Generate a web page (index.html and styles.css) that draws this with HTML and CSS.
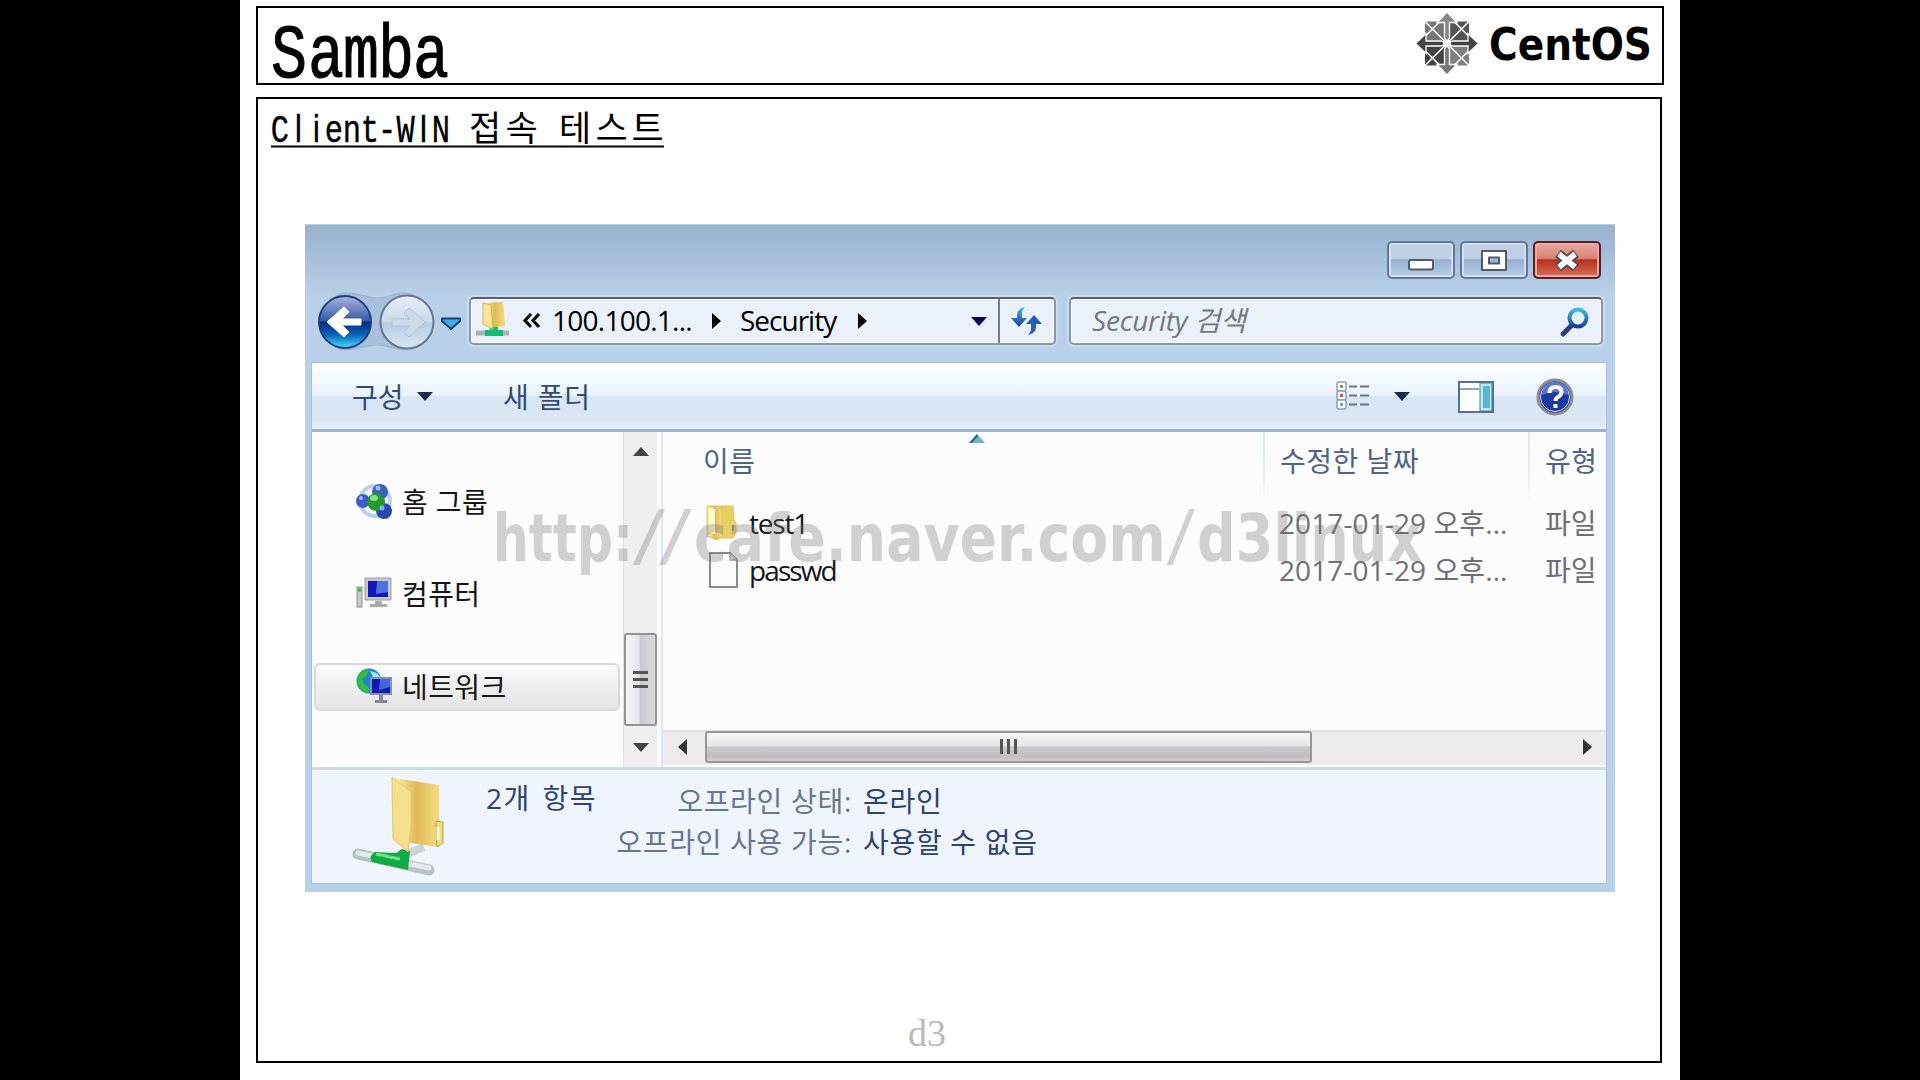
FILE: index.html
```html
<!DOCTYPE html>
<html lang="ko">
<head>
<meta charset="utf-8">
<title>Samba</title>
<link rel="stylesheet" href="styles.css">
</head>
<body>
<main class="slide">
  <header class="slide-head">
    <svg class="title" width="200" height="75" viewBox="258 8 200 75">
      <text transform="scale(.79 1)" y="77" x="365.8 412.7 457 501.3 545.6">Samba</text>
    </svg>
    <svg class="logo" width="246" height="70" viewBox="1410 8 246 70">
      <g transform="translate(1447 43.5)">
        <rect x="-22" y="-22" width="22" height="22" fill="#777"/><rect width="22" height="22" y="-22" fill="#555"/>
        <rect x="-22" width="22" height="22" fill="#444"/><rect width="22" height="22" fill="#808080"/>
        <g stroke="#fff" stroke-width="1.3">
          <path d="M-22-22 22 22M22-22-22 22M-7-22-16-13M7-22 16-13M-7 22-16 13M7 22 16 13M-22-7-13-16M22-7 13-16M-22 7-13 16M22 7 13 16" fill="none" stroke-width="1.500"/>
          <path d="M0-31.500 10-21H2.500V-6L0 0-2.500-6V-21H-10Z" fill="#888"/>
          <path d="M0 31.500 10 21H2.500V6L0 0-2.500 6V21H-10Z" fill="#777"/>
          <path d="M-31.500 0-21-10V-2.500H-6L0 0-6 2.500H-21V10Z" fill="#444"/>
          <path d="M31.500 0 21-10V-2.500H6L0 0 6 2.500H21V10Z" fill="#444"/>
        </g>
        <circle r="4" fill="#fff"/>
      </g>
      <text class="logo-text" y="59.500" x="1489" textLength="163" lengthAdjust="spacingAndGlyphs">CentOS</text>
    </svg>
  </header>

  <section class="slide-body">
    <svg class="subtitle" width="420" height="52" viewBox="258 99 420 52">
      <text class="latin" transform="scale(.8 1)" y="142" x="350 373.100 395.600 417.500 440 462.500 483.800 506.900 529.400 551.200">C<tspan class="bar">li</tspan>ent-W<tspan class="bar">I</tspan>N</text>
      <text class="hangul" y="140.500" x="485 521.500 539 575 611.500 647.500">접속 테스트</text>
      <path d="M271 146.500H664" stroke="#000" stroke-width="2"/>
    </svg>

    <div class="window">
      <div class="caption">
        <div class="cap-btn"><svg width="68" height="37"><rect x="22" y="18" width="24" height="9.500" rx="2" fill="#fff" stroke="#555a68" stroke-width="2"/></svg></div>
        <div class="cap-btn"><svg width="68" height="37"><path d="M22 9h24v19h-24zM29 15.500v6h10v-6z" fill="#fff" fill-rule="evenodd" stroke="#555a68" stroke-width="2" stroke-linejoin="round"/></svg></div>
        <div class="cap-btn close"><svg width="68" height="37"><path d="M25 11.500 43 25.500M43 11.500 25 25.500" stroke="#5c4a55" stroke-width="9.500"/><path d="M26 12 42 25M42 12 26 25" stroke="#fff" stroke-width="5.500"/></svg></div>
      </div>

      <div class="nav-row">
        <svg class="nav-btns" width="162" height="64" viewBox="308 290 162 64">
          <defs>
            <linearGradient id="bk" x2="0" y2="1"><stop stop-color="#aab6df"/><stop offset=".48" stop-color="#3558ac"/><stop offset=".5" stop-color="#082a80"/><stop offset=".75" stop-color="#0d63bd"/><stop offset="1" stop-color="#48e2ff"/></linearGradient>
            <linearGradient id="fw" x2="0" y2="1"><stop stop-color="#e6eff8"/><stop offset=".48" stop-color="#cbd9e9"/><stop offset=".52" stop-color="#b8cce3"/><stop offset="1" stop-color="#d6e6f6"/></linearGradient>
            <linearGradient id="fold" x2="1" y2="0"><stop stop-color="#fff3ae"/><stop offset=".5" stop-color="#dfba55"/><stop offset="1" stop-color="#f5dc80"/></linearGradient>
            <linearGradient id="cy" x2="0" y2="1"><stop stop-color="#42bce0"/><stop offset="1" stop-color="#1c3f94"/></linearGradient>
          </defs>
          <path d="M345 293c18 0 22 5 33 5s14-5 30-5a29 29 0 0 1 0 57c-14 0-18-5-30-5s-18 5-33 5a29 29 0 0 1 0-57z" fill="#a9c0dc" stroke="#9cb2cf"/>
          <circle cx="346" cy="322" r="26" fill="url(#bk)" stroke="#1d3f7e" stroke-width="2"/>
          <path d="M328 322 345 307 350 312 343 319H362V325H343L350 332 345 337Z" fill="#fff" stroke="#fff" stroke-linejoin="round"/>
          <circle cx="408" cy="322" r="26.500" fill="url(#fw)" stroke="#66788f" stroke-width="2"/>
          <path d="M426 322 410 308 405 313 411 319H393V326H411L405 332 410 337Z" fill="#ccdae9" stroke="#b6c6d9"/>
          <path d="M443 318.500H461V321L452 329 443 321Z" fill="#3eaee6" stroke="#163f78" stroke-width="2" stroke-linejoin="round"/>
        </svg>

        <div class="field address">
          <svg class="addr-icon" width="40" height="44" viewBox="472 299 40 44">
            <path d="M475 333H508" stroke="#a9b1b6" stroke-width="5"/><path d="M484 330h5v-5h8v5h5v6h-18z" fill="#13bd74"/>
            <path d="M483 303 502 302 503 313 504 326 494 327 483 324Z" fill="url(#fold)"/><path d="M482 303 490 305 492 329 482 324Z" fill="#f8e595" stroke="#d8b452"/>
          </svg>
          <svg width="34" height="44" viewBox="512 299 34 44"><path d="M530 314 524 320.500 530 327M538 314 532 320.500 538 327" fill="none" stroke="#000" stroke-width="3"/></svg>
          <span class="txt host">100.100.1...</span>
          <i class="tri right"></i>
          <span class="txt share">Security</span>
          <i class="tri right second"></i>
          <i class="tri down navy"></i>
          <div class="refresh"><svg width="34" height="34" viewBox="0 0 34 34"><path d="M15 3C7 5 7 9 7 14H1L9 23 17 14H12C12 10 11 7 15 3Z" fill="url(#cy)"/><path d="M18 31C26 29 26 25 26 20H32L24 11 16 20H21C21 24 22 27 18 31Z" fill="#285eae"/></svg></div>
        </div>

        <div class="field search">
          <span class="txt">Security 검색</span>
          <svg width="32" height="32" viewBox="0 0 32 32"><path d="M4 28 15 17" stroke="#263f86" stroke-width="5" stroke-linecap="round"/><circle cx="19" cy="12" r="8.500" fill="#e2f2fc" stroke="url(#cy)" stroke-width="4"/></svg>
        </div>
      </div>

      <div class="frame">
        <div class="toolbar">
          <span class="txt organize">구성</span><i class="tri down"></i>
          <span class="txt newfolder">새 폴더</span>
          <svg class="view" width="34" height="32" viewBox="0 0 34 32">
            <g fill="#fff" stroke="#8b9fb6" stroke-width="1.500"><rect x="1" y="1" width="9" height="9" rx="2"/><rect x="1" y="10" width="9" height="9" rx="2"/><rect x="1" y="19" width="9" height="9" rx="2"/></g>
            <path d="M4 5.500h3" stroke="#7a9b58" stroke-width="3"/><path d="M4 14.500h3" stroke="#e04c38" stroke-width="3"/><path d="M4 23.500h3" stroke="#8299b6" stroke-width="3"/>
            <path d="M13 5.500H21M24 5.500H33M13 14.500H21M24 14.500H33M13 23.500H21M24 23.500H33" stroke="#66758a" stroke-width="2"/>
          </svg>
          <i class="tri down viewtri"></i>
          <svg class="pane" width="36" height="32" viewBox="0 0 36 32"><rect x="1" y="1" width="34" height="30" fill="#fff" stroke="#53708d" stroke-width="2"/><path d="M2 8H21" stroke="#8ca4bc" stroke-width="2"/><rect x="22" y="2" width="12" height="28" fill="#b9eef8" stroke="#517d9b"/><rect x="25" y="5" width="7" height="22" fill="#5bb6ce"/></svg>
          <svg class="help" width="38" height="38" viewBox="0 0 38 38"><circle cx="19" cy="19" r="17" fill="#1b3aa4" stroke="#8c8d92" stroke-width="3"/><circle cx="19" cy="19" r="14.500" fill="none" stroke="#d8dcec"/><path d="M6 17a13 13 0 0 1 26 0q-13-6-26 0" fill="#5877ce"/><path d="M13.500 15q0-6 6-6t6 5q0 3-3.500 5-2.500 1.500-2.500 4M19.500 26v4" fill="none" stroke="#fff" stroke-width="4"/></svg>
        </div>

        <div class="content">
          <nav class="tree">
            <div class="node"><svg width="37" height="37" viewBox="0 0 37 37"><circle cx="19" cy="18" r="15" fill="none" stroke="#bad0ee" stroke-width="4"/><circle cx="24" cy="9" r="8" fill="#3b62bd"/><circle cx="7" cy="18" r="7" fill="#3f5ac9"/><circle cx="28" cy="28" r="8" fill="#2848b6"/><circle cx="20" cy="19" r="9" fill="#229a2d"/><ellipse cx="18" cy="15" rx="4" ry="3" fill="#8edc86"/><circle cx="5" cy="15" r="2" fill="#a8baf0"/><circle cx="26" cy="25" r="2.500" fill="#8ea6ec"/><circle cx="22" cy="5" r="2.500" fill="#9fc0ee"/></svg><span class="txt">홈 그룹</span></div>
            <div class="node"><svg width="37" height="37" viewBox="0 0 37 37"><rect x="1" y="11" width="5" height="20" fill="#c4c9ca" stroke="#8a9090"/><path d="M2 14h3" stroke="#26c42f" stroke-width="3"/><path d="M9 2H35V24H9Z" fill="#c8c9c9" stroke="#9b9ea1"/><path d="M12 5H32V21H12Z" fill="#1117bb"/><path d="M21 5H32V16L20 18Z" fill="#536fdf"/><path d="M19 25h7v3h5v3H14v-3h5z" fill="#a7a9ab"/></svg><span class="txt">컴퓨터</span></div>
            <div class="node selected"><svg width="37" height="37" viewBox="0 0 37 37"><circle cx="13" cy="13" r="12.500" fill="#1f85cf"/><path d="M2 8C7 1 10 1 13 2L11 7 6 11 8 16 13 20V25C5 24 1 18 1 13Z" fill="#35bd3c"/><path d="M14 3q9 1 11 8l-8-2z" fill="#9fe6f5"/><path d="M14 9H36V27H14Z" fill="#8590ad"/><path d="M16 11H34V25H16Z" fill="#1319b6"/><path d="M24 11H34V19L23 22Z" fill="#4963dc"/><path d="M23 27h4v5h4v3H19v-3h4z" fill="#7f8a9b"/></svg><span class="txt">네트워크</span></div>
          </nav>
          <div class="vbar">
            <i class="arrow up"></i>
            <div class="vthumb"><i></i><i></i><i></i></div>
            <i class="arrow dn"></i>
          </div>
          <div class="files">
            <div class="cols">
              <div class="col"><span class="txt">이름</span><svg class="sort" width="16" height="10"><path d="M0 9 8 0 16 9Z" fill="#6fb0cc"/><path d="M0 9 8 0 9 2 3 9Z" fill="#32657f"/></svg></div>
              <div class="col"><span class="txt">수정한 날짜</span></div>
              <div class="col"><span class="txt">유형</span></div>
            </div>
            <div class="row">
              <div class="name"><svg width="40" height="40" viewBox="0 0 40 40"><path d="M12 3H29L30 17 32 20V30L29 35H12Z" fill="#e9cf62" stroke="#dfc465"/><path d="M3 3H12L18 5V33L13 37 3 33Z" fill="url(#fold)" stroke="#dec362"/><path d="M5 5 11 6V31L5 30Z" fill="#fffbd5"/><path d="M29 22v6" stroke="#6ba7bd" stroke-width="2"/></svg><span class="txt">test1</span></div>
              <span class="txt date">2017-01-29 오후...</span><span class="txt type">파일</span>
            </div>
            <div class="row">
              <div class="name"><svg width="40" height="40" viewBox="0 0 40 40"><path d="M6 3H26L33 10V37H6Z" fill="#fafafa" stroke="#8a8a8a" stroke-width="2"/><path d="M26 3V10H33" fill="#ddd" stroke="#9b9b9b" stroke-width="1.500"/></svg><span class="txt passwd">passwd</span></div>
              <span class="txt date">2017-01-29 오후...</span><span class="txt type">파일</span>
            </div>
            <div class="hbar">
              <i class="arrow lf"></i>
              <div class="hthumb"><i></i><i></i><i></i></div>
              <i class="arrow rt"></i>
            </div>
          </div>
        </div>

        <div class="details">
          <svg class="share-icon" width="96" height="106" viewBox="350 772 96 106">
            <path d="M358 851 429 867" stroke="#b6c2c4" stroke-width="11" stroke-linecap="round"/><path d="M358 850 429 865" stroke="#e3eaea" stroke-width="5" stroke-linecap="round"/>
            <path d="M402 853 424 844" stroke="#ced4d6" stroke-width="8"/>
            <path d="M375 849 396 850 402 846 410 848 408 867 372 859Q368 853 375 849Z" fill="#12ab43"/><path d="M376 851 400 856" stroke="#6fe18c" stroke-width="3"/>
            <path d="M394 775 439 782 439 844 410 840Z" fill="url(#fold)"/><path d="M436 818 443 819V840L437 844Z" fill="#f3dc80" stroke="#b79d54"/><path d="M438 824V837" stroke="#fffbd9" stroke-width="3"/><path d="M392 774 411 789V824L408 849 393 836Z" fill="#f5df8c" stroke="#e6c96e"/>
          </svg>
          <span class="txt count">2개 항목</span>
          <div class="facts">
            <span class="txt label">오프라인 상태:</span><span class="txt value">온라인</span>
            <span class="txt label">오프라인 사용 가능:</span><span class="txt value">사용할 수 없음</span>
          </div>
        </div>
      </div>
    </div>
    <footer class="page-mark">d3</footer>
  </section>

  <svg class="watermark" width="960" height="80" viewBox="480 500 960 80">
    <text y="561"><tspan x="493" textLength="140" lengthAdjust="spacingAndGlyphs">http:</tspan><tspan class="slash" x="632" textLength="62" lengthAdjust="spacingAndGlyphs">//</tspan><tspan x="694" textLength="472" lengthAdjust="spacingAndGlyphs">cafe.naver.com</tspan><tspan class="slash" x="1166" textLength="31" lengthAdjust="spacingAndGlyphs">/</tspan><tspan x="1197" textLength="225" lengthAdjust="spacingAndGlyphs">d3linux</tspan></text>
  </svg>
</main>
</body>
</html>
```
FILE: styles.css
```css
* { box-sizing: border-box; }
body { margin: 0; background: #000; font-family: "Open Sans", "Noto Sans CJK KR", sans-serif; }
svg { display: block; flex: none; overflow: visible; }
i { display: block; flex: none; }

.slide { position: relative; width: 1440px; height: 1080px; margin: 0 auto; padding: 6px 16px 0; background: #fff; overflow: hidden; }
.slide-head { width: 1408px; height: 79px; border: 2px solid #000; display: flex; justify-content: space-between; }
.slide-body { width: 1406px; height: 966px; margin-top: 12px; border: 2px solid #000; display: flex; flex-direction: column; }
.title text { font: 76px "Liberation Mono", monospace; text-anchor: middle; stroke: #000; stroke-width: 1px; }
.logo { margin-right: 6px; }
.logo-text { font: bold 45px "DejaVu Sans", sans-serif; }
.subtitle .latin { font: 38px "Liberation Mono", monospace; text-anchor: middle; stroke: #000; stroke-width: .4px; }
.subtitle .bar { font-family: "Liberation Sans", sans-serif; font-size: 38px; }
.subtitle .hangul { font: 35px "Noto Sans CJK KR", sans-serif; text-anchor: middle; }

.txt { font-size: 28px; line-height: 36px; white-space: nowrap; }

/* Explorer window */
.window { width: 1310px; height: 668px; margin: 73px 0 0 47px; padding: 0 9px 9px 7px; background: linear-gradient(#98b2d0, #b9d0ea 72px, #b9d0ea); border-top: 1px solid #b7cbe1; display: flex; flex-direction: column; }
.caption { height: 66px; padding: 16px 5px 0 0; display: flex; justify-content: flex-end; gap: 5px; }
.cap-btn { width: 68px; height: 38px; border: 2px solid #64779a; border-radius: 5px; background: linear-gradient(#bfd0e6 0 45%, #96b1d1 50%, #b5cde8); box-shadow: inset 0 0 0 2px #d3e0f0; display: flex; align-items: center; justify-content: center; }
.close { border-color: #55202d; background: linear-gradient(#e8a79c, #d88376 45%, #b6321d 50%, #d8705a); box-shadow: inset 0 0 0 2px #eba99e; }
.nav-row { height: 72px; display: flex; align-items: flex-start; }
.nav-btns { margin: -1px 0 0 -5px; }
.field { height: 48px; margin-top: 6px; border: 2px solid #8497ad; border-top-color: #59606b; border-radius: 5px; background: #eaf1fa; box-shadow: 0 0 0 2px #cbdbee, inset 0 0 0 1px #fff; display: flex; align-items: center; }
.field .txt { margin-top: -3px; }
.address { width: 587px; }
.addr-icon { margin-left: 2px; }
.host { width: 160px; margin-left: 5px; letter-spacing: -.75px; }
.address .share { width: 120px; margin-left: 19px; letter-spacing: -1px; }
.tri { width: 0; height: 0; border: solid transparent; }
.tri.right { border-width: 8px 0 8px 9px; border-left-color: #000; margin-left: 0; }
.tri.right.second { margin-left: -2px; }
.tri.down { border-width: 9px 8px 0; border-top-color: #17294e; }
.tri.navy { border-top-color: #080758; margin-left: 104px; }
.refresh { width: 56px; height: 44px; margin-left: auto; border-left: 2px solid #747d8a; display: flex; align-items: center; justify-content: center; }
.search { width: 534px; margin-left: 13px; padding: 0 10px 0 21px; justify-content: space-between; }
.search svg { margin-top: 1px; }
.search .txt { font-style: italic; color: #747880; letter-spacing: -.2px; }

.frame { width: 1294px; flex: 1; background: #fcfcfc; box-shadow: 0 0 0 1px #a7bfdd; display: flex; flex-direction: column; }
.toolbar { height: 69px; padding: 1px 32px 0 40px; border-bottom: 3px solid #a3b2ca; background: linear-gradient(#fcfeff, #ebf3fc 48%, #dae5f3 52%, #dce7f5 88%, #e5f0fc); color: #334b72; display: flex; align-items: center; }
.organize { width: 65px; }
.newfolder { margin-left: 70px; letter-spacing: .8px; }
.view { margin-left: auto; }
.viewtri { margin-left: 24px; }
.pane { margin-left: 48px; }
.help { margin-left: 42px; }

.content { height: 335px; display: flex; }
.tree { width: 311px; padding: 46px 3px 0 2px; display: flex; flex-direction: column; gap: 45px; }
.node { height: 47.5px; padding-left: 40px; border: 2px solid transparent; border-radius: 6px; display: flex; align-items: center; gap: 9px; color: #161616; }
.node .txt { letter-spacing: .4px; }
.node.selected { border-color: #dadada; background: linear-gradient(#fafafa, #e4e4e4); }
.vbar { width: 34px; background: #efefef; border-left: 1px solid #e2e2e2; display: flex; flex-direction: column; align-items: center; }
.arrow { width: 0; height: 0; border: solid transparent; }
.up { border-width: 0 8px 9px; border-bottom-color: #444; margin-top: 15px; }
.vthumb { width: 33px; height: 93px; margin-top: 177px; border: 2px solid #949494; border-radius: 3px; background: linear-gradient(90deg, #f6f6f6, #e5e5e8 45%, #c9c9cf 50%, #d9d9dd); display: flex; flex-direction: column; gap: 4px; align-items: center; justify-content: center; }
.vthumb i { width: 15px; height: 3px; background: #555; }
.dn { border-width: 9px 8px 0; border-top-color: #444; margin-top: 17px; }
.files { flex: 1; margin-left: 4px; border-left: 2px solid #dfe8f6; display: flex; flex-direction: column; }
.cols { height: 67px; display: grid; grid-template-columns: 600px 265px 1fr; }
.col { position: relative; padding: 11px 0 0 15px; color: #506584; }
.col:first-child { padding-left: 40px; }
.col + .col { border-left: 2px solid; border-image: linear-gradient(#dce7f4, #e6eef7 70%, transparent) 1; }
.col .txt { letter-spacing: .5px; }
.sort { position: absolute; left: 306px; top: 2px; }
.row { height: 47px; display: grid; grid-template-columns: 616px 266px 1fr; align-items: center; color: #6e7076; }
.name { padding-left: 41px; display: flex; align-items: center; gap: 5px; color: #15161c; }
.name .txt { letter-spacing: -1.2px; }
.name .passwd { letter-spacing: -1.9px; }
.date { letter-spacing: .1px; }
.hbar { height: 35px; margin: auto 0 2px; padding-bottom: 4px; background: #ececec; border-top: 2px solid #e0e0e0; display: flex; align-items: center; }
.lf { border-width: 8px 9px 8px 0; border-right-color: #333; margin-left: 15px; }
.hthumb { width: 607px; height: 32px; margin-left: 18px; border: 2px solid #979797; border-radius: 3px; background: linear-gradient(#f6f6f6, #e6e6e7 45%, #cbcbcd 50%, #bebec2 85%, #d0d0d2); display: flex; gap: 4px; align-items: center; justify-content: center; }
.hthumb i { width: 3px; height: 15px; background: #555; }
.rt { border-width: 8px 0 8px 9px; border-left-color: #333; margin: 0 14px 0 auto; }

.details { flex: 1; padding: 5px 0 0 38px; background: #f0f4fc; border-top: 3px solid #cfdcea; display: flex; color: #2c456c; }
.count { margin: 5px 0 0 40px; width: 128px; letter-spacing: 1.5px; word-spacing: 3px; }
.facts { display: grid; grid-template-columns: 238px auto; column-gap: 11px; grid-auto-rows: 41px; padding-top: 8px; align-content: start; letter-spacing: .7px; }
.label { color: #66778f; text-align: right; }

.page-mark { margin: 119px 0 0 650px; font: 38px/44px "Liberation Serif", serif; color: #bababa; }
.watermark { position: absolute; left: 240px; top: 500px; fill: #6e6e6e; opacity: .3; }
.watermark text { font: bold 66px "DejaVu Sans", sans-serif; }
.watermark .slash { font: 72px Roboto, sans-serif; }
```
